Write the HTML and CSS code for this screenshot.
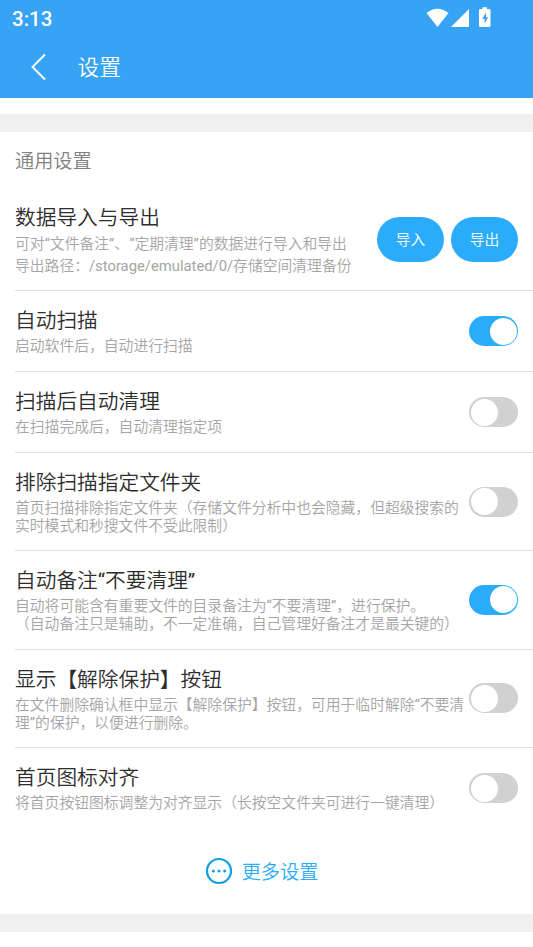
FILE: index.html
```html
<!DOCTYPE html>
<html lang="zh-CN">
<head>
<meta charset="utf-8">
<title>设置</title>
<link rel="stylesheet" href="styles.css">
</head>
<body>
<header class="top">
  <div class="status">
    <span class="clock">3:13</span>
    <svg class="status-icons" width="68" height="24" viewBox="0 0 68 24" fill="#fff">
      <path d="M0.500 13Q11.500 4.500 22.500 13L11.500 27Z"/>
      <path d="M43 9v18H25z"/>
      <path fill-rule="evenodd" d="M56.500 7.200h4.500v1.800h2.200q1.300 0 1.300 1.300v15.400q0 1.300-1.300 1.300h-8.900q-1.300 0-1.300-1.300V10.300q0-1.300 1.300-1.300h2.200zM60 12.500l-3.800 6.200h2.400v4.700l3.600-6.200H60z"/>
    </svg>
  </div>
  <div class="nav">
    <svg class="back" width="16" height="28" viewBox="0 0 16 28"><path d="M14 1.500L1.500 14L14 26.500" fill="none" stroke="#fff" stroke-width="1.900"/></svg>
    <h1 class="page-title">设置</h1>
  </div>
</header>
<div class="band"></div>
<main class="card">
  <h2 class="section">通用设置</h2>
  <div class="row transfer">
    <div class="copy"><div class="name">数据导入与导出</div><div class="desc">可对<span class="latin">“</span>文件备注<span class="latin">”</span>、<span class="latin">“</span>定期清理<span class="latin">”</span>的数据进行导入和导出<br>导出路径：<span class="latin">/storage/emulated/0/</span>存储空间清理备份</div></div>
    <div class="actions"><button class="pill">导入</button><button class="pill">导出</button></div>
  </div>
  <div class="row single">
    <div class="copy"><div class="name">自动扫描</div><div class="desc">启动软件后，自动进行扫描</div></div>
    <span class="switch on"></span>
  </div>
  <div class="row single">
    <div class="copy"><div class="name">扫描后自动清理</div><div class="desc">在扫描完成后，自动清理指定项</div></div>
    <span class="switch"></span>
  </div>
  <div class="row tall">
    <div class="copy"><div class="name">排除扫描指定文件夹</div><div class="desc">首页扫描排除指定文件夹（存储文件分析中也会隐藏，但超级搜索的<br>实时模式和秒搜文件不受此限制）</div></div>
    <span class="switch"></span>
  </div>
  <div class="row tall">
    <div class="copy"><div class="name">自动备注<span class="latin">“</span>不要清理<span class="latin">”</span></div><div class="desc">自动将可能含有重要文件的目录备注为<span class="latin">“</span>不要清理<span class="latin">”</span>，进行保护。<br>（自动备注只是辅助，不一定准确，自己管理好备注才是最关键的）</div></div>
    <span class="switch on"></span>
  </div>
  <div class="row tall">
    <div class="copy"><div class="name">显示【解除保护】按钮</div><div class="desc">在文件删除确认框中显示【解除保护】按钮，可用于临时解除<span class="latin">“</span>不要清<br>理<span class="latin">”</span>的保护，以便进行删除。</div></div>
    <span class="switch"></span>
  </div>
  <div class="row single last">
    <div class="copy"><div class="name">首页图标对齐</div><div class="desc">将首页按钮图标调整为对齐显示（长按空文件夹可进行一键清理）</div></div>
    <span class="switch"></span>
  </div>
  <div class="more">
    <svg width="28" height="28" viewBox="0 0 28 28"><circle cx="14" cy="14" r="12" fill="none" stroke="#109de9" stroke-width="2.200"/><g fill="#109de9"><circle cx="8.400" cy="14" r="1.500"/><circle cx="14" cy="14" r="1.500"/><circle cx="19.700" cy="14" r="1.500"/></g></svg>
    <span>更多设置</span>
  </div>
</main>
<div class="foot"></div>
</body>
</html>
```
FILE: styles.css
```css
* { box-sizing: border-box; }
body {
  margin: 0;
  height: 947px;
  overflow: hidden;
  background: #fff;
  font-family: Roboto, "Noto Sans CJK SC", sans-serif;
  font-weight: 350;
  text-spacing-trim: space-all;
}
h1, h2 { margin: 0; font-weight: 350; }
.latin { font-weight: 400; }
.top { height: 98px; background: #37a3f5; color: #fff; }
.status { height: 37px; padding: 0 39px 0 12px; display: flex; align-items: center; justify-content: space-between; }
.clock { font-size: 20.5px; font-weight: 500; line-height: 37px; padding-top: 1px; }
.status-icons { overflow: visible; margin-top: -13px; }
.nav { height: 61px; padding-left: 31px; display: flex; align-items: center; }
.back { margin-bottom: 1px; }
.page-title { margin-left: 30.5px; font-size: 21.700px; line-height: 30px; }
.band { height: 18px; margin-top: 16px; background: #f0f0f0; }
.card { height: 782px; display: flex; flex-direction: column; }
.card > * { flex-shrink: 0; }
.section { height: 57px; padding-left: 15px; font-size: 19.200px; line-height: 60px; color: #808080; }
.row {
  height: 81px;
  margin-left: 15px;
  padding-right: 15px;
  display: flex;
  align-items: center;
  justify-content: space-between;
  border-bottom: 1px solid #dedede;
}
.tall { height: 98.330px; }
.transfer { height: 102px; }
.last { height: 81px; border-bottom: 0; }
.copy { white-space: nowrap; padding-top: 2px; }
.single .copy { padding-top: 0; }
.name { font-size: 20.700px; line-height: 26px; color: #2d2d2d; }
.desc { margin-top: 3px; font-size: 14.800px; line-height: 18px; color: #a5a5a5; }
.transfer .copy { padding-top: 3px; }
.transfer .desc { margin-top: 2px; line-height: 22px; }
.actions { display: flex; gap: 7px; }
.pill { width: 67px; height: 45px; padding: 0 0 2px; border: 0; border-radius: 23px; background: #2aacfb; color: #fff; font: inherit; font-size: 14.800px; }
.switch { flex: none; width: 49px; height: 30px; padding: 1.500px; border-radius: 15px; background: #d1d1d1; display: flex; margin-left: -10px; }
.switch::before { content: ""; width: 27px; height: 27px; border-radius: 50%; background: #fff; }
.on { background: #2aacfb; justify-content: flex-end; }
.more { height: 85px; display: flex; align-items: center; justify-content: center; gap: 9px; padding-right: 10px; font-size: 19.200px; color: #2aacfb; }
.foot { height: 18px; background: #f0f0f0; }
```
